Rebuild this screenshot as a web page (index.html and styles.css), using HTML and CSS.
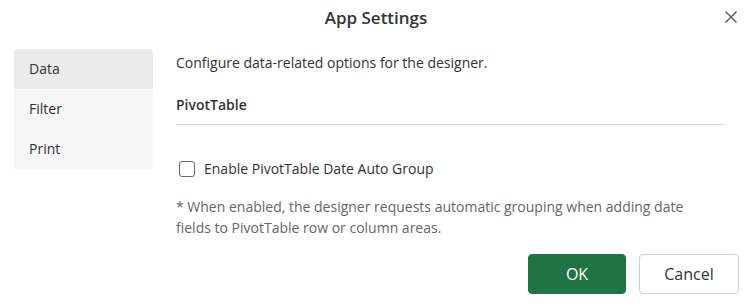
FILE: index.html
```html
<!DOCTYPE html>
<html>
<head>
    <title>App Settings</title>
    <link rel="stylesheet" href="styles.css">
</head>
<body>
    <div class="dialog">
        <div class="dialog-header">
            <h2 class="dialog-title">App Settings</h2>
            <button class="close-button" title="Close">
                <svg width="14" height="14" viewBox="0 0 14 14"><path d="M1.5 1.5 L12.5 12.5 M12.5 1.5 L1.5 12.5" stroke="#666" stroke-width="1.6" fill="none"/></svg>
            </button>
        </div>

        <div class="dialog-body">
            <!-- Category list -->
            <div class="nav">
                <div class="nav-item active">Data</div>
                <div class="nav-item">Filter</div>
                <div class="nav-item">Print</div>
            </div>

            <!-- Data settings -->
            <div class="panel">
                <p class="panel-desc">Configure data-related options for the designer.</p>
                <div class="section-title">PivotTable</div>
                <label class="check-row">
                    <span class="checkbox"></span>
                    <span>Enable PivotTable Date Auto Group</span>
                </label>
                <p class="note">* When enabled, the designer requests automatic grouping when adding date fields to PivotTable row or column areas.</p>
            </div>
        </div>

        <div class="dialog-footer">
            <button class="btn btn-primary">OK</button>
            <button class="btn">Cancel</button>
        </div>
    </div>
</body>
</html>
```

FILE: styles.css
```css
body {
    margin: 0;
    background: #fff;
    font-family: "Segoe UI", "Open Sans", "Noto Sans", sans-serif;
    font-size: 14px;
    color: #333;
}
.dialog { width: 752px; height: 304px; overflow: hidden; }
.dialog-header {
    height: 34px;
    display: flex;
    align-items: center;
    justify-content: center;
    position: relative;
}
.dialog-title {
    margin: 0;
    font-size: 17px;
    font-weight: 600;
    color: #333;
}
.close-button {
    position: absolute;
    right: 12px;
    top: 8px;
    width: 18px;
    height: 18px;
    padding: 0;
    border: none;
    background: none;
    display: flex;
    align-items: center;
    justify-content: center;
}
.dialog-body {
    display: flex;
    padding: 15px 27px 0 14px;
    gap: 23px;
}
.nav {
    width: 139px;
    flex-shrink: 0;
    align-self: flex-start;
    background: #f7f7f7;
    border-radius: 4px 4px 0 0;
}
.nav-item {
    height: 40px;
    line-height: 40px;
    padding-left: 15px;
    color: #333;
}
.nav-item.active {
    background: #ebebeb;
    border-radius: 4px 4px 0 0;
}
.panel { flex: 1; }
.panel-desc {
    margin: 4px 0 0 0;
    line-height: 20px;
}
.section-title {
    margin-top: 22px;
    font-weight: 600;
    line-height: 20px;
    padding-bottom: 9px;
    border-bottom: 1px solid #d9d9d9;
}
.check-row {
    display: flex;
    align-items: center;
    gap: 9px;
    margin-top: 34px;
    padding-left: 3px;
    line-height: 20px;
}
.checkbox {
    width: 14px;
    height: 14px;
    border: 1px solid #666;
    border-radius: 3px;
    background: #fff;
}
.note {
    margin: 17px 0 0 0;
    max-width: 540px;
    color: #666;
    line-height: 21px;
}
.dialog-footer {
    display: flex;
    justify-content: flex-end;
    gap: 13px;
    padding: 16px 13px 0 0;
}
.btn {
    width: 100px;
    height: 40px;
    border: 1px solid #d0d0d0;
    border-radius: 4px;
    background: #fff;
    color: #333;
    font-family: inherit;
    font-size: 16px;
}
.btn-primary {
    width: 98px;
    background: #217346;
    border-color: #217346;
    color: #fff;
}
```
